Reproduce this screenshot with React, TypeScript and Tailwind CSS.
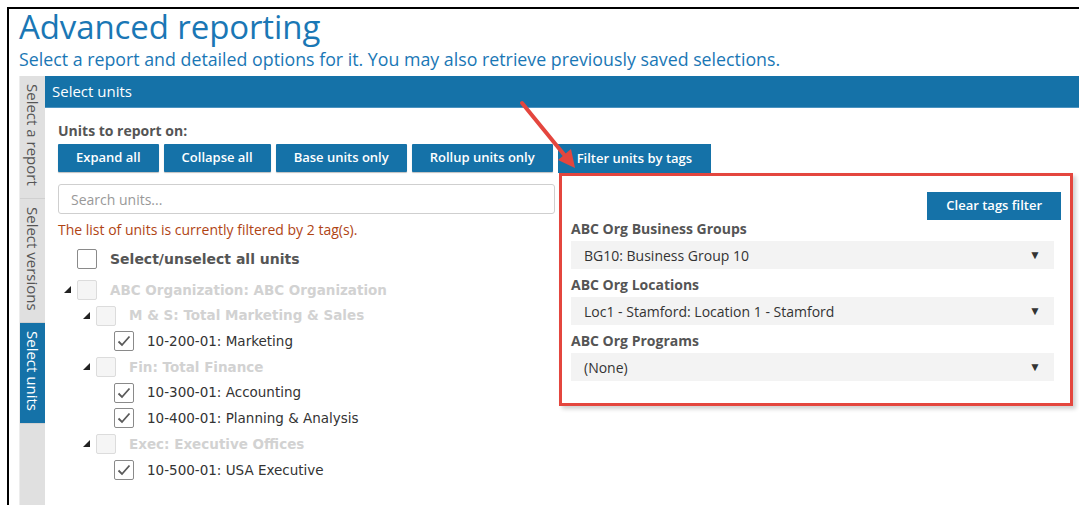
import React from "react"

const blue = "bg-[#1572a8]"

type Node = { label: string; level: number; rollup?: boolean; checked?: boolean }

const units: Node[] = [
  { label: "ABC Organization: ABC Organization", level: 0, rollup: true },
  { label: "M & S: Total Marketing & Sales", level: 1, rollup: true },
  { label: "10-200-01: Marketing", level: 2, checked: true },
  { label: "Fin: Total Finance", level: 1, rollup: true },
  { label: "10-300-01: Accounting", level: 2, checked: true },
  { label: "10-400-01: Planning & Analysis", level: 2, checked: true },
  { label: "Exec: Executive Offices", level: 1, rollup: true },
  { label: "10-500-01: USA Executive", level: 2, checked: true },
]

const tagSelects = [
  { label: "ABC Org Business Groups", value: "BG10: Business Group 10" },
  { label: "ABC Org Locations", value: "Loc1 - Stamford: Location 1 - Stamford" },
  { label: "ABC Org Programs", value: "(None)" },
]

const Checkbox = ({ checked, disabled }: { checked?: boolean; disabled?: boolean }) => (
  <span
    className={
      disabled
        ? "flex h-5 w-5 shrink-0 items-center justify-center rounded-[2px] border border-[#dcdcdc] bg-[#f5f5f5]"
        : "flex h-5 w-5 shrink-0 items-center justify-center rounded-[2px] border border-[#8a8a8a] bg-white"
    }
  >
    {checked && (
      <svg width="14" height="12" viewBox="0 0 14 12">
        <path d="M1.5 6.5 L5 10 L12.5 1.5" fill="none" stroke="#5a5a5a" strokeWidth="1.8" />
      </svg>
    )}
  </span>
)

const Expander = () => (
  <svg width="7" height="7" viewBox="0 0 7 7" className="shrink-0">
    <path d="M7 0 L7 7 L0 7 Z" fill="#222" />
  </svg>
)

const TreeRow = ({ node }: { node: Node }) => {
  const pad = ["pl-[6px]", "pl-[25px]", "pl-[56px]"][node.level]
  return (
    <div className={`flex h-[25.7px] items-center ${pad}`}>
      {node.rollup && (
        <span className="flex w-[13px] items-center">
          <Expander />
        </span>
      )}
      <Checkbox checked={node.checked} disabled={node.rollup} />
      <span
        className={
          node.rollup
            ? "ml-[13px] text-[13.5px] font-bold text-[#d2d2d2]"
            : "ml-[13px] text-[13.5px] text-[#333]"
        }
      >
        {node.label}
      </span>
    </div>
  )
}

const SideTab = ({ label, active, h }: { label: string; active?: boolean; h: string }) => (
  <div
    className={`${h} flex justify-center border-b border-[#d0d0d0] pt-[8px] ${
      active ? `${blue} text-white` : "text-[#555]"
    }`}
  >
    <span className="text-[15px] leading-none [writing-mode:vertical-rl]">{label}</span>
  </div>
)

export default function App() {
  return (
    <div className="relative h-[505px] w-[1079px] overflow-hidden bg-white font-['Open_Sans',sans-serif]">
      <div className="ml-[7px] mt-[7px] h-[498px] border-l-2 border-t-2 border-black pl-[10px]">
        <h1 className="-mt-[2px] text-[33px] leading-[40px] tracking-[-0.1px] text-[#1a77b5]">Advanced reporting</h1>
        <p className="mt-[2px] text-[17.8px] leading-[20px] text-[#1a77b5]">
          Select a report and detailed options for it. You may also retrieve previously saved selections.
        </p>

        <div className="mt-[7px] flex h-[430px]">
          {/* vertical step tabs */}
          <div className="flex w-[26px] flex-col border-l border-[#ededed] bg-[#e0e0e0]">
            <SideTab label="Select a report" h="h-[123px]" />
            <SideTab label="Select versions" h="h-[124px]" />
            <SideTab label="Select units" active h="h-[101px]" />
          </div>

          <div className="flex-1">
            <div className={`${blue} flex h-[32px] items-center border-b border-[#4c93c0] pl-[7px] text-[15px] text-white`}>
              Select units
            </div>

            <div className="pl-[13px]">
              <div className="mt-[14px] text-[14px] font-bold leading-[18px] text-[#555]">Units to report on:</div>

              <div className="mt-[4px] flex gap-[5px] text-[13px] font-semibold text-white">
                {["Expand all", "Collapse all", "Base units only", "Rollup units only"].map((b) => (
                  <div
                    key={b}
                    className={`${blue} flex h-[28px] items-center rounded-[1px] px-[18px] shadow-[0_1px_1px_rgba(0,0,0,0.25)]`}
                  >
                    {b}
                  </div>
                ))}
                <div className={`${blue} flex h-[29px] items-center px-[19px]`}>Filter units by tags</div>
              </div>

              <div className="flex">
                <div className="w-[497px]">
                  <div className="mt-[11px] flex h-[30px] items-center rounded-[3px] border border-[#cfcfcf] pl-[12px] text-[14px] text-[#999]">
                    Search units...
                  </div>
                  <div className="mt-[7px] text-[14px] leading-[18px] text-[#b04414]">
                    The list of units is currently filtered by 2 tag(s).
                  </div>

                  <div className="mt-[7px] font-['DejaVu_Sans',sans-serif]">
                    <div className="flex h-[26px] items-center pl-[19px]">
                      <Checkbox />
                      <span className="ml-[13px] text-[14px] font-bold text-[#555]">Select/unselect all units</span>
                    </div>
                    <div className="mt-[5px]">
                      {units.map((u) => (
                        <TreeRow key={u.label} node={u} />
                      ))}
                    </div>
                  </div>
                </div>

                {/* tag filter panel */}
                <div className="ml-[4px] h-[233px] w-[514px] border-[3px] border-[#e4463e] px-[9px] pt-[16px] shadow-[3px_3px_4px_rgba(0,0,0,0.18)]">
                  <div className="flex justify-end">
                    <div className={`${blue} flex h-[28px] items-center px-[19px] text-[13px] font-semibold text-white`}>
                      Clear tags filter
                    </div>
                  </div>
                  <div className="-mt-[1px] flex flex-col gap-[6px] pr-[7px]">
                    {tagSelects.map((s) => (
                      <div key={s.label}>
                        <div className="text-[14px] font-bold leading-[19px] text-[#555]">{s.label}</div>
                        <div className="mt-[3px] flex h-[28px] items-center justify-between bg-[#f3f3f3] pl-[13px] pr-[13px] text-[14px] text-[#333]">
                          <span>{s.value}</span>
                          <span className="text-[12px] text-[#333]">▼</span>
                        </div>
                      </div>
                    ))}
                  </div>
                </div>
              </div>
            </div>
          </div>
        </div>
      </div>

      {/* callout arrow pointing at the tag filter */}
      <svg className="pointer-events-none absolute left-0 top-0" width="1079" height="505">
        <line x1="522" y1="103" x2="566" y2="157" stroke="#e4463e" strokeWidth="4" strokeLinecap="round" />
        <path d="M575 168 L558 160 L571 149 Z" fill="#e4463e" />
      </svg>
    </div>
  )
}
